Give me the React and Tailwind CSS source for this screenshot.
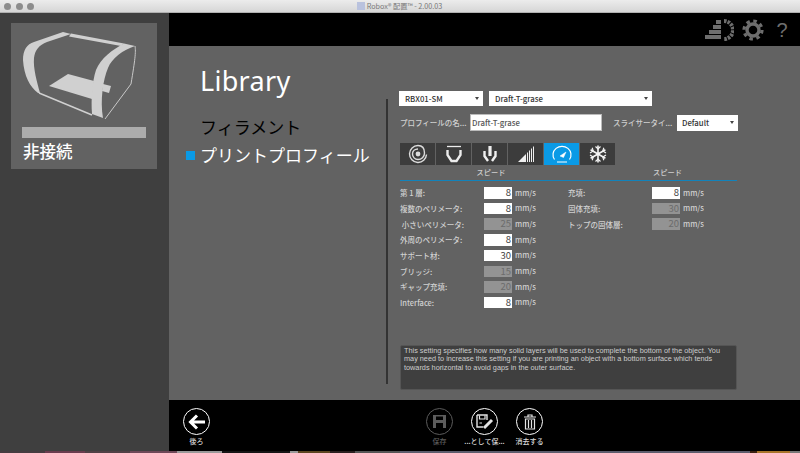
const jp = "font-['Noto_Sans_CJK_JP','Noto_Sans',sans-serif]";

const leftRows = [
  { label: "第 1 層:", value: "8" },
  { label: "複数のペリメータ:", value: "8" },
  { label: " 小さいペリメータ:", value: "25", off: true },
  { label: "外周のペリメータ:", value: "8" },
  { label: "サポート材:", value: "30" },
  { label: "ブリッジ:", value: "15", off: true },
  { label: "ギャップ充填:", value: "20", off: true },
  { label: "Interface:", value: "8" },
];

const rightRows = [
  { label: "充填:", value: "8" },
  { label: "固体充填:", value: "30", off: true },
  { label: "トップの固体層:", value: "20", off: true },
];

const Row = ({ label, value, off }) => (
  <div className="flex items-center h-[15.7px]">
    <span className="w-[84px] text-[7.5px] font-medium text-[#d0d0d0] whitespace-pre">{label}</span>
    <span
      className={`w-[28px] h-[11.5px] pr-[1px] text-right text-[9.5px] leading-[11.5px] ${
        off ? "bg-[#939393] text-[#6c6c6c]" : "bg-white text-[#444]"
      }`}
    >
      {value}
    </span>
    <span className="ml-[3px] -mt-[1px] text-[7.6px] font-medium text-[#d0d0d0]">mm/s</span>
  </div>
);

const Select = ({ text, width }) => (
  <div className={`${width} h-[15px] bg-white flex items-center justify-between pl-[6px] pr-[4px]`}>
    <span className="text-[7.8px] font-medium text-[#333]">{text}</span>
    <span className="w-0 h-0 border-x-[2.5px] border-x-transparent border-t-[3px] border-t-[#444]" />
  </div>
);

const PrinterIcon = () => (
  <svg width="146" height="100" viewBox="11 23 146 100" fill="#d0d0d0">
    <path d="M49 86 L68 74 L94 81 L92 99 Z" />
    <path d="M103 84 L111 86 L109 93 L102 91 Z" />
    <path d="M63 32 L71 34 L47 42 C39 45 35 50 34 58 C33 68 37 82 40 93 L38 93 C30 87 24 76 23 60 C23 50 27 44 34 42 Z" />
    <path d="M71 33.5 L124 43.5 L121 46 L69 36.5 Z" />
    <path d="M124 43.5 L135 46 C123 50 112 58 108 68 C103 80 100 100 103 118 L92 114 C91 100 92 82 96 70 C101 58 112 50 124 43.5 Z" />
    <path d="M135 46 C136 52 135 60 131 84 L105 119" fill="none" stroke="#c8c8c8" strokeWidth="1" />
    <path d="M39 93 L92 115" fill="none" stroke="#d0d0d0" strokeWidth="1.5" />
  </svg>
);

const TabIcon = ({ kind }) => {
  if (kind === "spiral")
    return (
      <svg width="20" height="20" viewBox="0 0 20 20" fill="none" stroke="#dcdcdc">
        <path d="M18.5 10.5 A8.5 8.5 0 1 1 10 1.5 C14.5 1.5 16.5 5 16.5 9 C16.5 13 13.5 15.5 10 15.5 C6.8 15.5 4.5 13 4.5 10 C4.5 7 7 5 10 5" strokeWidth="1.4" />
        <circle cx="10" cy="10" r="2.4" fill="#dcdcdc" strokeWidth="0" />
      </svg>
    );
  if (kind === "shell")
    return (
      <svg width="18" height="18" viewBox="0 0 18 18" fill="none" stroke="#ececec">
        <path d="M2 1.5 H16" strokeWidth="1.3" />
        <path d="M2.5 5 V10 L6.5 16 H11.5 L15.5 10 V5" strokeWidth="2.4" />
      </svg>
    );
  if (kind === "nozzle")
    return (
      <svg width="18" height="18" viewBox="0 0 18 18" fill="none" stroke="#f0f0f0">
        <path d="M9 1 V11" strokeWidth="3.2" />
        <path d="M3.5 6 V11 L7 16 M14.5 6 V11 L11 16" strokeWidth="2.4" />
      </svg>
    );
  if (kind === "infill")
    return (
      <svg width="18" height="18" viewBox="0 0 18 18">
        <path d="M1 17 L17 1 V17 Z" fill="#f0f0f0" />
        <path d="M9.5 17 V8 M11.5 17 V6 M13.5 17 V4 M15.5 17 V2" stroke="#3c3c3c" strokeWidth="1" />
      </svg>
    );
  if (kind === "gauge")
    return (
      <svg width="22" height="20" viewBox="0 0 22 20" fill="none" stroke="#fff">
        <path d="M3.5 15.5 A9 8.5 0 1 1 18.5 15.5" strokeWidth="1.2" />
        <path d="M6 18 H16" strokeWidth="1" />
        <path d="M9 12 L15 8 L12.5 13.5 Z" fill="#fff" strokeWidth="0.5" />
      </svg>
    );
  return (
    <svg width="18" height="18" viewBox="0 0 18 18" fill="none" stroke="#f4f4f4" strokeWidth="1.6">
      <path d="M9 0.5 V17.5 M1.6 4.8 L16.4 13.2 M1.6 13.2 L16.4 4.8" />
      <path d="M6.5 1.5 L9 4 L11.5 1.5 M6.5 16.5 L9 14 L11.5 16.5 M1 8 L4.2 6 L3.2 2.8 M17 8 L13.8 6 L14.8 2.8 M1 10 L4.2 12 L3.2 15.2 M17 10 L13.8 12 L14.8 15.2" strokeWidth="1.2" />
    </svg>
  );
};

const tabs = ["spiral", "shell", "nozzle", "infill", "gauge", "snow"];

const RoundButton = ({ label, dim, children }) => (
  <div className="flex flex-col items-center w-[27px]">
    <div
      className={`w-[27px] h-[27px] rounded-full border-[1.5px] flex items-center justify-center ${
        dim ? "border-[#5c5c5c]" : "border-white"
      }`}
    >
      {children}
    </div>
    <span className={`mt-px text-[7px] leading-[10px] font-medium whitespace-nowrap ${dim ? "text-[#5c5c5c]" : "text-[#d8d8d8]"}`}>
      {label}
    </span>
  </div>
);

const App = () => {
  return (
    <div className={`w-[800px] h-[453px] overflow-hidden flex flex-col bg-black ${jp}`}>
      {/* title bar */}
      <div className="h-[13px] shrink-0 bg-gradient-to-b from-[#ececec] to-[#d6d6d6] border-b border-[#b0b0b0] flex items-center">
        <div className="flex gap-[4.5px] pl-[4px]">
          <span className="w-[7px] h-[7px] rounded-full bg-[#8c8c8c]" />
          <span className="w-[7px] h-[7px] rounded-full bg-[#8c8c8c]" />
          <span className="w-[7px] h-[7px] rounded-full bg-[#8c8c8c]" />
        </div>
        <div className="flex-1 flex justify-center items-center gap-[2px] pr-[35px]">
          <span className="w-[8px] h-[8px] bg-[#b9c2de]" />
          <span className="text-[7.2px] leading-[12px] text-[#777]">Robox® 配置™ - 2.00.03</span>
        </div>
      </div>

      <div className="flex-1 flex min-h-0">
        {/* status column */}
        <aside className="w-[169px] shrink-0 bg-[#3f3f3f] pt-[10px] pl-[11px]">
          <div className="w-[146px] h-[146px] bg-[#626262] flex flex-col">
            <PrinterIcon />
            <div className="mt-[4px] mx-[11px] h-[11px] bg-[#acacac] shrink-0" />
            <span className="ml-[12px] mt-[1px] text-[16.5px] leading-[24px] font-medium text-white">非接続</span>
          </div>
        </aside>

        <div className="flex-1 flex flex-col min-w-0">
          {/* top bar */}
          <div className="h-[33px] shrink-0 bg-black flex items-center justify-end pr-[12px] gap-[8px]">
            <svg width="30" height="22" viewBox="0 0 30 22">
              <path d="M12 1 H17 V5 H12 Z M9 6 H17 V10 H9 Z M5 11 H17 V15 H5 Z M1 16 H17 V20 H1 Z" fill="#6e6e6e" />
              <path d="M20 2 A9 9 0 0 1 20 20" fill="none" stroke="#6e6e6e" strokeWidth="4" strokeDasharray="2.6 1" />
            </svg>
            <svg width="22" height="22" viewBox="0 0 22 22" fill="none" stroke="#6e6e6e">
              <circle cx="11" cy="11" r="6" strokeWidth="3.4" />
              <circle cx="11" cy="11" r="9" strokeWidth="3.2" strokeDasharray="3.53 3.54" />
            </svg>
            <span className="ml-[4px] w-[12px] text-center text-[20px] leading-[22px] text-[#6e6e6e] font-['Liberation_Sans',sans-serif]">?</span>
          </div>

          {/* content */}
          <div className="flex-1 min-h-0 bg-[#626262] flex">
            <div className="w-[217px] shrink-0 pl-[17px]">
              <h1 className="pl-[14px] mt-[17px] text-[27px] leading-[36px] tracking-[0.3px] text-white font-['Noto_Sans',sans-serif]">Library</h1>
              <p className="pl-[14px] mt-[15px] text-[17px] leading-[26px] text-black">フィラメント</p>
              <div className="mt-[2px] flex items-center">
                <span className="w-[9px] h-[9px] bg-[#0a9ae6] mr-[5px]" />
                <span className="text-[17px] leading-[26px] text-white whitespace-nowrap">プリントプロフィール</span>
              </div>
            </div>

            <div className="w-[2px] h-[285px] mt-[53px] bg-[#333] shrink-0" />

            <div className="pl-[11px] pt-[45px] w-[360px]">
              <div className="flex gap-[6px]">
                <Select text="RBX01-SM" width="w-[84px]" />
                <Select text="Draft-T-grase" width="w-[163px]" />
              </div>

              <div className="flex items-center mt-[8px] ml-px h-[17px]">
                <span className="w-[70px] text-[7.5px] font-medium text-[#d0d0d0] whitespace-nowrap">プロフィールの名...</span>
                <span className="w-[132px] h-[17px] bg-white border border-[#bbb] pl-[1px] text-[7.8px] leading-[15px] font-medium text-[#555]">Draft-T-grase</span>
                <span className="ml-[11px] w-[64px] text-[7.5px] font-medium text-[#d0d0d0] whitespace-nowrap">スライサータイ...</span>
                <div className="w-[61px] h-[16px] bg-white flex items-center justify-between pl-[5px] pr-[4px]">
                  <span className="text-[7.8px] font-medium text-[#333]">Default</span>
                  <span className="w-0 h-0 border-x-[2.5px] border-x-transparent border-t-[3px] border-t-[#444]" />
                </div>
              </div>

              <div className="flex mt-[12px] ml-px gap-[1px]">
                {tabs.map((t) => (
                  <div
                    key={t}
                    className={`w-[35px] h-[22px] flex items-center justify-center ${t === "gauge" ? "bg-[#0a9ae6]" : "bg-[#3c3c3c]"}`}
                  >
                    <TabIcon kind={t} />
                  </div>
                ))}
              </div>

              <div className="w-[337px] ml-px h-[16px] border-b-[1.5px] border-[#1283bb] flex">
                <span className="w-[182px] shrink-0 pt-[1px] text-center text-[7.2px] leading-[13px] font-medium text-[#d0d0d0]">スピード</span>
                <span className="w-[171px] shrink-0 pt-[1px] text-center text-[7.2px] leading-[13px] font-medium text-[#d0d0d0]">スピード</span>
              </div>

              <div className="flex mt-[4px] ml-px">
                <div className="w-[168px]">
                  {leftRows.map((r) => (
                    <Row key={r.label} {...r} />
                  ))}
                </div>
                <div>
                  {rightRows.map((r) => (
                    <Row key={r.label} {...r} />
                  ))}
                </div>
              </div>

              <div className="mt-[34px] ml-px w-[337px] h-[45px] bg-[#3f3f3f] rounded-[2px] border border-[#555] pl-[3px] pt-[1px] text-[7.3px] leading-[8.5px] text-[#cdcdcd] whitespace-nowrap font-['Liberation_Sans',sans-serif]">
                This setting specifies how many solid layers will be used to complete the bottom of the object. You
                <br />
                may need to increase this setting if you are printing an object with a bottom surface which tends
                <br />
                towards horizontal to avoid gaps in the outer surface.
              </div>
            </div>
          </div>

          {/* bottom bar */}
          <div className="h-[51px] shrink-0 bg-black flex items-start pt-[8px] pl-[14px]">
            <RoundButton label="後ろ">
              <svg width="18" height="16" viewBox="0 0 18 16" fill="none" stroke="#fff" strokeWidth="3">
                <path d="M9 1.5 L2.5 8 L9 14.5 M3 8 H17" />
              </svg>
            </RoundButton>
            <div className="ml-[216px] flex gap-[18px]">
              <RoundButton label="保存" dim>
                <svg width="15" height="15" viewBox="0 0 15 15" fill="#5c5c5c">
                  <path d="M1 1 H14 V14 H1 Z M4 2.5 V6 H11 V2.5 Z M4 9 V14 H11 V9 Z" fillRule="evenodd" />
                </svg>
              </RoundButton>
              <RoundButton label="...として保...">
                <svg width="18" height="16" viewBox="0 0 18 16" fill="none" stroke="#e4e4e4">
                  <path d="M1 1 H11 V6 M1 1 V13 H7" strokeWidth="1.4" />
                  <path d="M3.5 1.5 V5 H9 V1.5 M3.5 9 H6" strokeWidth="1.2" />
                  <path d="M8 14 L16 6" strokeWidth="3" />
                </svg>
              </RoundButton>
              <RoundButton label="消去する">
                <svg width="14" height="16" viewBox="0 0 14 16" fill="none" stroke="#e4e4e4" strokeWidth="1.2">
                  <path d="M1 3 H13 M5 3 V1 H9 V3" />
                  <path d="M2.5 5 H11.5 V15 H2.5 Z M5.5 6 V14 M8.5 6 V14" />
                </svg>
              </RoundButton>
            </div>
          </div>
        </div>
      </div>

      {/* desktop showing below the window */}
      <div className="h-[2px] shrink-0 flex">
        <span className="w-[45px] bg-[#453c40]" />
        <span className="w-[40px] bg-[#6a3c4e]" />
        <span className="w-[45px] bg-[#504045]" />
        <span className="w-[47px] bg-[#6e4858]" />
        <span className="w-[45px] bg-[#999]" />
        <span className="w-[68px] bg-[#151515]" />
        <span className="w-[8px] bg-[#999]" />
        <span className="w-[32px] bg-[#5c4520]" />
        <span className="w-[25px] bg-[#2a2020]" />
        <span className="w-[45px] bg-[#555]" />
        <span className="w-[350px] bg-[#5c5c6c]" />
        <span className="w-[7px] bg-[#3a2010]" />
        <span className="w-[33px] bg-[#a8742a]" />
        <span className="flex-1 bg-[#777]" />
      </div>
    </div>
  );
};

export default App;
